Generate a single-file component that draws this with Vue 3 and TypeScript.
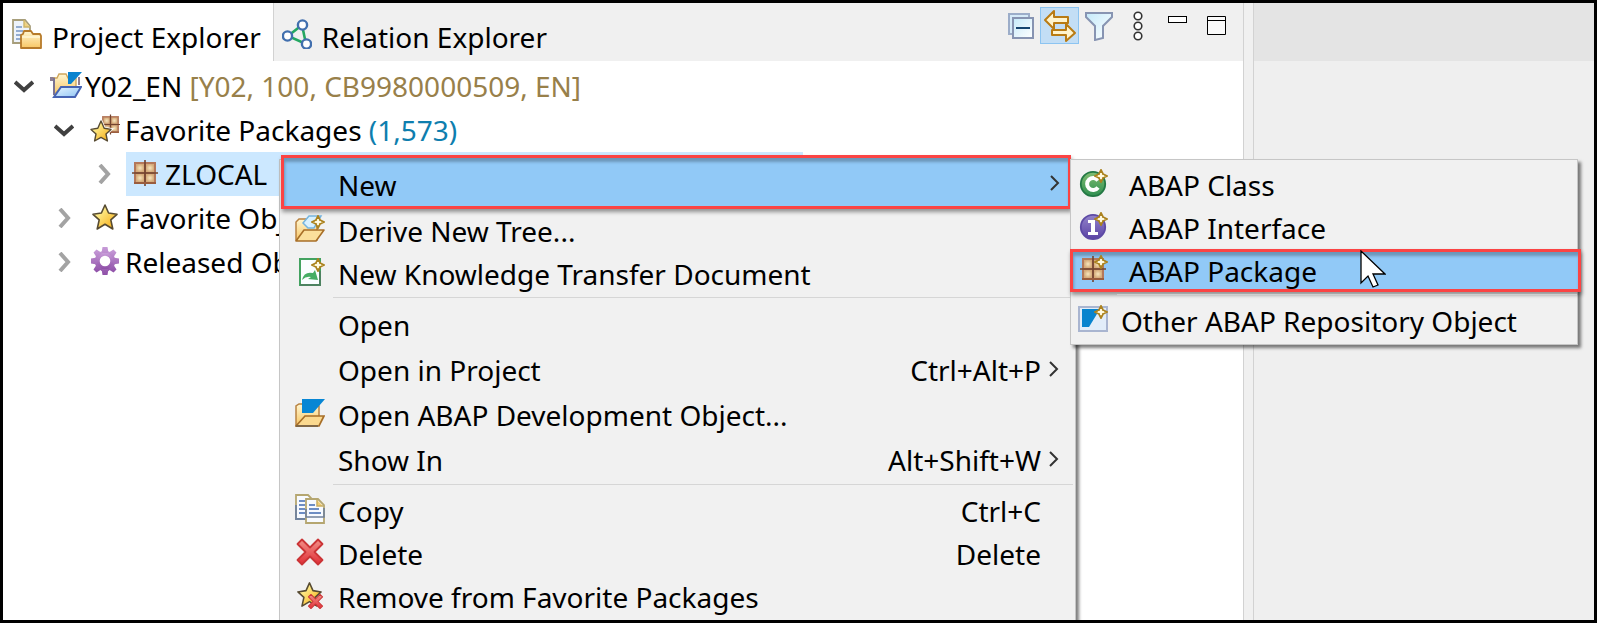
<script setup lang="ts">
import { ref } from 'vue'

interface TreeRow {
  label: string
  detail?: string
  tone?: string
  icon: string
  level: number
  open: boolean
  selected?: boolean
}

interface MenuEntry {
  label: string
  icon?: string
  keys?: string
  sub?: boolean
  marked?: boolean
}

const rows: TreeRow[] = [
  { label: 'Y02_EN', detail: '[Y02, 100, CB9980000509, EN]', tone: 'gold', icon: 'project', level: 0, open: true },
  { label: 'Favorite Packages', detail: '(1,573)', tone: 'blue', icon: 'fav-package', level: 1, open: true },
  { label: 'ZLOCAL', icon: 'package', level: 2, open: false, selected: true },
  { label: 'Favorite Objects', icon: 'star', level: 1, open: false },
  { label: 'Released Objects', icon: 'gear', level: 1, open: false },
]

const groups: MenuEntry[][] = [
  [
    { label: 'New', sub: true, marked: true },
    { label: 'Derive New Tree...', icon: 'derive' },
    { label: 'New Knowledge Transfer Document', icon: 'document' },
  ],
  [
    { label: 'Open' },
    { label: 'Open in Project', keys: 'Ctrl+Alt+P', sub: true },
    { label: 'Open ABAP Development Object...', icon: 'open-abap' },
    { label: 'Show In', keys: 'Alt+Shift+W', sub: true },
  ],
  [
    { label: 'Copy', icon: 'copy', keys: 'Ctrl+C' },
    { label: 'Delete', icon: 'delete', keys: 'Delete' },
    { label: 'Remove from Favorite Packages', icon: 'remove' },
  ],
]

const newObjects: MenuEntry[] = [
  { label: 'ABAP Class', icon: 'class' },
  { label: 'ABAP Interface', icon: 'interface' },
  { label: 'ABAP Package', icon: 'new-package', marked: true },
]

const activeTab = ref('project')
</script>

<template>
  <div class="window">
    <svg class="defs" aria-hidden="true">
      <defs>
        <linearGradient id="gold" x1="0" y1="0" x2="0" y2="1"><stop offset="0" stop-color="#fff6d2" /><stop offset="1" stop-color="#f8c765" /></linearGradient>
        <linearGradient id="starfill" x1="0" y1="0" x2="1" y2="1"><stop offset="0.2" stop-color="#fff59a" /><stop offset="1" stop-color="#f4a508" /></linearGradient>
        <linearGradient id="ice" x1="0" y1="0" x2="1" y2="1"><stop offset="0" stop-color="#c5eafa" /><stop offset="1" stop-color="#ffffff" /></linearGradient>
        <linearGradient id="sky" x1="0" y1="0" x2="1" y2="1"><stop offset="0" stop-color="#e8f6ff" /><stop offset="1" stop-color="#8fc4f4" /></linearGradient>
        <linearGradient id="red" x1="0" y1="0" x2="0" y2="1"><stop offset="0" stop-color="#f29088" /><stop offset="1" stop-color="#e02e36" /></linearGradient>
        <linearGradient id="purple" x1="0" y1="0" x2="0" y2="1"><stop offset="0" stop-color="#c79bd8" /><stop offset="1" stop-color="#8f50a8" /></linearGradient>
        <radialGradient id="tan"><stop offset="0" stop-color="#f7e6bd" /><stop offset="1" stop-color="#d5ab7a" /></radialGradient>
        <linearGradient id="green" x1="0" y1="0" x2="0" y2="1"><stop offset="0" stop-color="#82bd72" /><stop offset="1" stop-color="#2f8f50" /></linearGradient>
        <linearGradient id="violet" x1="0" y1="0" x2="0" y2="1"><stop offset="0" stop-color="#9384ca" /><stop offset="1" stop-color="#5b43a5" /></linearGradient>
      </defs>

      <symbol id="plus" viewBox="0 0 14 14">
        <path d="M7 1 9 5 13 7 9 9 7 13 5 9 1 7 5 5Z" fill="#fff3bd" stroke="#ab821f" stroke-width="1.8" />
        <path d="M7 4v6M4 7h6" stroke="#fffbe8" stroke-width="1.600" />
      </symbol>

      <symbol id="package" viewBox="0 0 30 30">
        <rect x="4" y="4" width="22" height="22" fill="#b4785b" />
        <g fill="url(#tan)"><rect x="6" y="6" width="8" height="8" /><rect x="16" y="6" width="8" height="8" /><rect x="6" y="16" width="8" height="8" /><rect x="16" y="16" width="8" height="8" /></g>
        <path d="M15 2v26M2 15h26" stroke="#72442f" stroke-width="1.600" />
        <path d="M4 25h22" stroke="#9a5c3d" stroke-width="2" />
      </symbol>

      <symbol id="star" viewBox="0 0 30 30">
        <path d="M15 3 18.6 11 27 12.3 20.8 17.9 22.8 27 15 22.3 7.2 27 9.2 17.9 3 12.3 11.4 11Z" fill="url(#starfill)" stroke="#574b32" stroke-width="1.6" stroke-linejoin="round" />
      </symbol>

      <symbol id="fav-package" viewBox="0 0 30 30">
        <use href="#package" x="9" y="-1" width="23" height="23" />
        <path d="M11 7 14.2 14.2 21 15.4 16 20 17.4 27 11 23.4 4.6 27 6 20 1 15.4 7.8 14.2Z" fill="url(#starfill)" stroke="#fff" stroke-width="3" />
        <path d="M11 7 14.2 14.2 21 15.4 16 20 17.4 27 11 23.4 4.6 27 6 20 1 15.4 7.8 14.2Z" fill="url(#starfill)" stroke="#574b32" stroke-width="1.4" stroke-linejoin="round" />
      </symbol>

      <symbol id="project" viewBox="0 0 32 30">
        <path d="M0 7h5v4H0Z" fill="#8d7f92" />
        <path d="M4 24V8h3l2-4h7l2 4h8v13H8Z" fill="url(#gold)" stroke="#cfa75c" stroke-width="1.4" />
        <path d="M4 8v17" stroke="#7b7393" stroke-width="2" />
        <path d="M18 2h14L21 14h-3Z" fill="#0a83cf" />
        <path d="M29 7v8" stroke="#8d7f92" stroke-width="2" />
        <path d="M4 27 11 17h20l-6 10Z" fill="url(#sky)" stroke="#4664b4" stroke-width="2" />
      </symbol>

      <symbol id="gear" viewBox="0 0 30 30">
        <circle cx="15" cy="15" r="7.800" fill="none" stroke="url(#purple)" stroke-width="5" />
        <g fill="url(#purple)">
          <path d="M12.500 1h5l1 6h-7ZM12.500 29h5l1-6h-7ZM1 12.500v5l6 1v-7ZM29 12.500v5l-6 1v-7Z" />
          <path d="M3.500 6.500 6.500 3.500 12 7 7 12ZM26.500 6.500 23.500 3.500 18 7l5 5ZM3.500 23.500l3 3L12 23l-5-5ZM26.500 23.500l-3 3L18 23l5-5Z" />
        </g>
      </symbol>

      <symbol id="folder-page" viewBox="0 0 30 30">
        <path d="M1 1h12l5 6v17H1Z" fill="#edf3fb" stroke="#a79e7b" stroke-width="1.8" />
        <path d="M12 1v7h6" fill="#efd283" stroke="#cdb469" stroke-width="1.4" />
        <path d="M4 8h6M4 12h7M4 16h5M4 20h5" stroke="#7695c4" stroke-width="1.6" />
        <path d="M9 29V16l2-1 1-3h7l2 3h7l1 2v12Z" fill="url(#gold)" stroke="#b77b2b" stroke-width="1.8" stroke-linejoin="round" />
        <path d="M10 18h18" stroke="#fff7d9" stroke-width="1.4" />
      </symbol>

      <symbol id="relation" viewBox="0 0 30 30">
        <path d="M20 6 6 17l18 8Z" fill="none" stroke="#24a862" stroke-width="2.6" />
        <g fill="#fff" stroke="#416fae" stroke-width="2.4"><circle cx="20.500" cy="6" r="4.600" /><circle cx="5.500" cy="17" r="4.600" /><circle cx="24.500" cy="25" r="4.600" /></g>
      </symbol>

      <symbol id="derive" viewBox="0 0 30 30">
        <path d="M1 26V8l3-3h7l2 3h9v18Z" fill="url(#gold)" stroke="#b98341" stroke-width="1.5" />
        <path d="M8 9 14 2h12l-7 12h-6Z" fill="#d8f1ff" stroke="#75b4de" stroke-width="1.5" />
        <path d="M1 27 9 16h20l-8 11Z" fill="#fbdf9b" stroke="#a86f28" stroke-width="1.6" stroke-linejoin="round" />
        <use href="#plus" x="16" y="1" width="14" height="14" />
      </symbol>

      <symbol id="document" viewBox="0 0 30 30">
        <path d="M5 2h20v26H5Z" fill="#fafdff" stroke="#43a260" stroke-width="2" />
        <path d="M25 14v14H5" fill="none" stroke="#4d8260" stroke-width="2" />
        <path d="M7 23q2-9 11-7l2-3 3 10-10-1 3-2q-5-1-9 3Z" fill="#46ad65" />
        <use href="#plus" x="16" y="1" width="14" height="14" />
      </symbol>

      <symbol id="open-abap" viewBox="0 0 30 30">
        <path d="M1 27V8l3-2h6l2 2h12v14Z" fill="url(#gold)" stroke="#b98341" stroke-width="1.5" />
        <path d="M7 1h23L18 15H7Z" fill="#0786d4" />
        <path d="M1 28 10 18h19l-5 10Z" fill="#fbd98f" stroke="#a86f28" stroke-width="1.700" />
        <path d="M1 28h22" stroke="#806746" stroke-width="2" />
      </symbol>

      <symbol id="copy" viewBox="0 0 30 30">
        <g fill="#f7faff" stroke="#b5a670" stroke-width="1.8">
          <path d="M1 1h12l5 5v19H1Z" /><path d="M1 11v14h10" fill="none" stroke="#6f829e" />
        </g>
        <path d="M4 7h6M4 11h6M4 15h6M4 19h6" stroke="#6d8dc4" stroke-width="1.8" />
        <path d="M11 5h12l6 6v18H11Z" fill="#f7faff" stroke="#b5a670" stroke-width="1.8" />
        <path d="M14 11h6M14 15h10M14 19h12" stroke="#6d8dc4" stroke-width="1.8" />
        <path d="M22 6v6h6" fill="#f1cd75" stroke="#c9ad60" stroke-width="1.5" />
        <path d="M29 14v9H11v-8" fill="none" stroke="#71819b" stroke-width="1.6" />
      </symbol>

      <symbol id="cross" viewBox="0 0 30 30">
        <path d="M7 2.500 15 10.500 23 2.500 27.500 7 19.500 15 27.500 23 23 27.500 15 19.500 7 27.500 2.500 23 10.500 15 2.500 7Z" fill="url(#red)" stroke="#cb3436" stroke-width="1.8" stroke-linejoin="round" />
      </symbol>
      <symbol id="delete" viewBox="0 0 30 30"><use href="#cross" width="30" height="30" /></symbol>
      <symbol id="remove" viewBox="0 0 30 30">
        <use href="#star" width="29" height="29" />
        <use href="#cross" x="12" y="13" width="17" height="17" />
      </symbol>

      <symbol id="class" viewBox="0 0 30 30">
        <circle cx="15" cy="16" r="12.200" fill="url(#green)" stroke="#237844" stroke-width="1.8" />
        <path d="M20 12.500a6 6 0 1 0 0 7" fill="none" stroke="#fff" stroke-width="4" />
        <use href="#plus" x="16" y="1" width="14" height="14" />
      </symbol>
      <symbol id="interface" viewBox="0 0 30 30">
        <circle cx="15" cy="16" r="12.200" fill="url(#violet)" stroke="#5d4aa5" stroke-width="1.8" />
        <path d="M10 9h7v12h3v3H10v-3h3v-9h-3Z" fill="#fff" />
        <use href="#plus" x="16" y="1" width="14" height="14" />
      </symbol>
      <symbol id="new-package" viewBox="0 0 30 30">
        <use href="#package" width="30" height="30" />
        <use href="#plus" x="16" y="1" width="14" height="14" />
      </symbol>
      <symbol id="repository" viewBox="0 0 30 30">
        <rect x="1" y="3" width="28" height="24" fill="#e2edf9" stroke="#a9b5d0" stroke-width="2" />
        <path d="M4 5h18L11 23H4Z" fill="#0884ce" />
        <use href="#plus" x="16" y="1" width="14" height="14" />
      </symbol>
    </svg>

    <section class="explorer">
      <header class="bar">
        <div class="tabs" role="tablist">
          <button class="tab" :class="{ active: activeTab === 'project' }" role="tab" @click="activeTab = 'project'">
            <svg class="icon"><use href="#folder-page" /></svg>Project Explorer
          </button>
          <button class="tab" :class="{ active: activeTab === 'relation' }" role="tab" @click="activeTab = 'relation'">
            <svg class="icon"><use href="#relation" /></svg>Relation Explorer
          </button>
        </div>
        <div class="tools">
          <button class="tool" aria-label="Collapse All">
            <svg class="icon" viewBox="0 0 30 30">
              <rect x="3" y="3" width="20" height="20" fill="#d5eaf8" stroke="#9cadc9" stroke-width="2" />
              <rect x="7" y="7" width="20" height="20" fill="url(#ice)" stroke="#8794b2" stroke-width="2" />
              <path d="M10 17h14" stroke="#15446f" stroke-width="2" />
            </svg>
          </button>
          <button class="tool on" aria-label="Link with Editor">
            <svg class="link" viewBox="0 0 34 34">
              <g fill="#fff4cd" stroke="#b97b13" stroke-width="2" stroke-linejoin="round">
                <path d="M2 11 11 2v6h14v6H11v6Z" /><path d="M32 24 23 15v6H9v5h14v6Z" />
              </g>
            </svg>
          </button>
          <button class="tool" aria-label="Filter">
            <svg class="icon" viewBox="0 0 30 30">
              <path d="M2 2h26v4L19 15v12l-8 2V15L2 6Z" fill="url(#ice)" stroke="#8794b2" stroke-width="2" />
            </svg>
          </button>
          <button class="tool" aria-label="View Menu">
            <svg class="icon" viewBox="0 0 30 30"><g fill="#fff" stroke="#333" stroke-width="1.600"><circle cx="15" cy="5" r="3.800" /><circle cx="15" cy="15" r="3.800" /><circle cx="15" cy="25" r="3.800" /></g></svg>
          </button>
          <button class="tool" aria-label="Minimize">
            <svg class="icon" viewBox="0 0 30 30"><rect x="6.500" y="5.500" width="18" height="6" fill="#fff" stroke="#000" /></svg>
          </button>
          <button class="tool" aria-label="Maximize">
            <svg class="icon" viewBox="0 0 30 30"><path d="M6.500 5.500h18v18h-18ZM6.500 9.500h18" fill="#fafafa" stroke="#000" /></svg>
          </button>
        </div>
      </header>

      <ul class="tree" role="tree">
        <li v-for="row in rows" :key="row.label" class="row" :class="'level-' + row.level" role="treeitem">
          <svg class="twisty" viewBox="0 0 20 20">
            <path v-if="row.open" d="M1 6 10 14 19 6" fill="none" stroke="#404040" stroke-width="4" />
            <path v-else d="M6 1 14 10 6 19" fill="none" stroke="#a3a3a3" stroke-width="4" />
          </svg>
          <span class="node" :class="{ selected: row.selected }">
            <svg class="icon"><use :href="'#' + row.icon" /></svg>
            <span>{{ row.label }} <span v-if="row.detail" :class="row.tone">{{ row.detail }}</span></span>
          </span>
        </li>
      </ul>
    </section>
    <section class="editor"><div class="editor-bar"></div></section>

    <div class="menu context" role="menu">
      <div v-for="(group, g) in groups" :key="g" class="group">
        <button v-for="item in group" :key="item.label" class="item" :class="{ marked: item.marked }" role="menuitem">
          <svg class="icon"><use v-if="item.icon" :href="'#' + item.icon" /></svg>
          <span class="label">{{ item.label }}</span>
          <span class="keys">{{ item.keys }}</span>
          <svg class="arrow" viewBox="0 0 10 18"><path v-if="item.sub" d="M1 2 8 9 1 16" fill="none" stroke="#333" stroke-width="2" /></svg>
        </button>
      </div>
    </div>

    <div class="menu submenu" role="menu">
      <button v-for="item in newObjects" :key="item.label" class="item" :class="{ marked: item.marked }" role="menuitem">
        <svg class="icon"><use :href="'#' + item.icon" /></svg>
        <span class="label">{{ item.label }}</span>
      </button>
      <hr class="rule" />
      <button class="item last" role="menuitem">
        <svg class="icon"><use href="#repository" /></svg>
        <span class="label">Other ABAP Repository Object</span>
      </button>
    </div>

    <svg class="pointer" viewBox="0 0 26 38"><path d="M1 1v32l7-7 5 11 5-2-5-11h12Z" fill="#fff" stroke="#000" stroke-width="1.300" /></svg>
  </div>
</template>

<style>
body { margin: 0; background: #efefef; }
</style>

<style scoped>
* { box-sizing: border-box; }
.window {
  position: relative;
  display: flex;
  height: 100vh;
  overflow: hidden;
  border: 3px solid #000;
  background: #f0f0f0;
  color: #000;
  font: 28px/40px "Noto Sans", "Open Sans", sans-serif;
}
button {
  padding: 0;
  border: 0;
  background: none;
  color: inherit;
  font: inherit;
  text-align: left;
}
.defs { position: absolute; width: 0; height: 0; }
.icon { display: block; flex: none; width: 30px; height: 30px; }

.explorer {
  flex: 1242 1 0;
  min-width: 0;
  border-right: 1px solid #d2d2d2;
  background: #fff;
}
.editor {
  flex: 340 1 0;
  margin-left: 9px;
  border-left: 1px solid #d2d2d2;
  background: #efefef;
}
.editor-bar { height: 58px; background: #e4e4e4; }

.bar {
  display: flex;
  justify-content: space-between;
  height: 58px;
  background: #f0f0f0;
}
.tabs { display: flex; }
.tab {
  display: flex;
  align-items: center;
  gap: 10px;
  padding: 10px 12px 0 9px;
  white-space: nowrap;
}
.tab + .tab { padding-left: 8px; }
.tab .icon { margin-bottom: 6px; }
.tab.active { border-right: 1px solid #d2d2d2; background: #fff; }
.tools {
  display: flex;
  align-items: flex-start;
  padding: 4px 8px 0 0;
}
.tool {
  display: grid;
  place-items: center;
  width: 39px;
  height: 37px;
}
.tool.on { border: 1px solid #8cc4f1; background: #c3def5; }
.link { width: 34px; height: 34px; }

.tree { margin: 0; padding: 3px 0 0; list-style: none; }
.row { display: flex; align-items: center; height: 44px; padding-left: 11px; white-space: nowrap; }
.row.level-1 { padding-left: 51px; }
.row.level-2 { padding-left: 91px; }
.twisty { flex: none; width: 20px; height: 20px; margin-right: 12px; }
.node { display: flex; align-items: center; gap: 5px; height: 44px; padding: 0 4px; }
.node .icon { margin-bottom: 2px; }
.level-0 .node { gap: 3px; }
.level-0 .icon { width: 32px; }
.node.selected { width: 677px; background: #cce8ff; }
.gold { color: #98804a; }
.blue { color: #0e7eae; }

.menu {
  position: absolute;
  border: 1px solid #c6c6c6;
  background: #f1f1f1;
  box-shadow: 3px 3px 3px rgba(0, 0, 0, 0.5);
}
.context { top: 156px; left: 276px; width: 797px; padding: 0 2px; }
.submenu { top: 156px; left: 1067px; width: 508px; padding: 3px 0 2px; }
.item {
  display: flex;
  align-items: center;
  width: 100%;
  height: 43px;
  padding-left: 13px;
  white-space: nowrap;
}
.item .icon { margin: 0 13px 4px 0; }
.label { flex: 1; }
.keys { margin-right: 8px; }
.arrow { width: 10px; height: 18px; margin: 0 14px 2px 0; }
.group { padding-bottom: 2px; }
.group + .group { padding-top: 5px; }
.group + .group::before {
  content: "";
  display: block;
  height: 1px;
  margin: -5px 0 4px 51px;
  background: #d6d6d6;
}
.group:nth-child(2) .item { height: 45px; }

.item.marked {
  border: 3px solid #fb4444;
  background: #91c9f7;
  box-shadow: 1px 3px 4px rgba(0, 0, 0, 0.4), inset 1px 4px 3px rgba(0, 0, 0, 0.25);
}
.context .marked {
  width: 790px;
  height: 54px;
  margin: -5px 0 0 -1px;
  padding: 6px 0 0 11px;
}
.context .marked .arrow { margin: 0 8px 4px 0; }
.submenu .item { padding-left: 7px; }
.submenu .icon { margin-right: 21px; }
.submenu .marked { width: 511px; margin-left: -1px; padding-left: 5px; }
.rule { height: 1px; margin: 2px 0 4px 46px; border: 0; background: #cfcfcf; }
.submenu .last .icon { margin-right: 13px; }
.pointer { position: absolute; top: 247px; left: 1357px; width: 26px; height: 38px; }
</style>
